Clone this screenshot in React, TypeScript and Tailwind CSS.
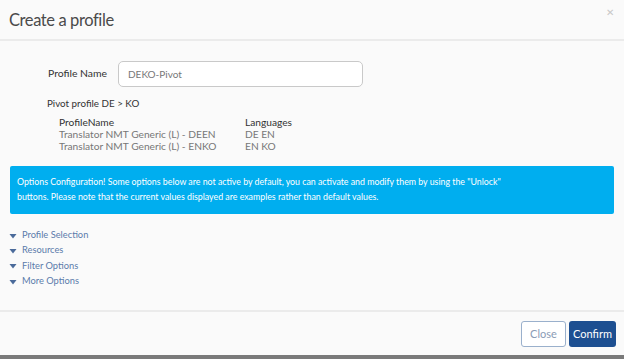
const sections = ["Profile Selection", "Resources", "Filter Options", "More Options"];

const rows = [
  { name: "Translator NMT Generic (L) - DEEN", langs: "DE EN" },
  { name: "Translator NMT Generic (L) - ENKO", langs: "EN KO" },
];

export default function App() {
  return (
    <div
      className="w-[624px] h-[359px] overflow-hidden bg-[#fafafa] flex flex-col text-[#333]"
      style={{ fontFamily: "Lato, 'Open Sans', sans-serif" }}
    >
      {/* header */}
      <div className="h-[41px] shrink-0 border-b-2 border-[#ebebeb] flex items-start justify-between pl-[9px] pr-[10px]">
        <h1 className="text-[16.5px] leading-none mt-[12px] text-[#4a4a4a] font-normal tracking-[-0.4px]">Create a profile</h1>
        <button className="text-[#c8c8c8] text-[10px] leading-none mt-[7px]">✕</button>
      </div>

      {/* body */}
      <div className="flex-1 flex flex-col">
        <div className="flex items-center mt-[20px] pl-[48px]">
          <label className="text-[10.4px] w-[70px]">Profile Name</label>
          <input
            readOnly
            value="DEKO-Pivot"
            className="w-[245px] h-[26px] border border-[#c9c9c9] rounded-[5px] bg-white px-[9px] text-[10px] text-[#777] outline-none"
          />
        </div>

        <div className="pl-[47px] mt-[10px] text-[9.8px] leading-[12px]">Pivot profile DE &gt; KO</div>

        <div className="pl-[59px] mt-[7px] text-[10.2px] leading-[12px]">
          <div className="flex">
            <span className="w-[186px]">ProfileName</span>
            <span>Languages</span>
          </div>
          {rows.map((r) => (
            <div key={r.name} className="flex text-[#777]">
              <span className="w-[186px]">{r.name}</span>
              <span>{r.langs}</span>
            </div>
          ))}
        </div>

        <div className="mx-[10px] mt-[14px] h-[48px] bg-[#00aeef] rounded-[2px] text-white text-[8.8px] leading-[15px] px-[7px] pt-[8px]">
          Options Configuration! Some options below are not active by default, you can activate and modify them by using the "Unlock"
          <br />
          buttons. Please note that the current values displayed are examples rather than default values.
        </div>

        <div className="mt-[13px] pl-[9px] flex flex-col">
          {sections.map((s) => (
            <div key={s} className="flex items-center h-[15.4px] text-[9.3px] text-[#5b7bab]">
              <svg width="8" height="6" viewBox="0 0 8 6" className="mr-[5px] mt-[2px]">
                <path d="M0.5 1h7L4 5.5z" fill="#4a6a9a" />
              </svg>
              {s}
            </div>
          ))}
        </div>
      </div>

      {/* footer */}
      <div className="h-[45px] shrink-0 border-t-2 border-[#ebebeb] flex items-start justify-end gap-[3px] pr-[8px] pt-[9px]">
        <button className="h-[26px] w-[45px] border border-[#9ab0cc] rounded-[3px] bg-white text-[11px] text-[#8a9bb5]">
          Close
        </button>
        <button className="h-[26px] w-[47px] rounded-[3px] bg-[#1d4f91] text-[11px] text-white">Confirm</button>
      </div>
      <div className="h-[4px] shrink-0 bg-[#7a7a7a]" />
    </div>
  );
}
